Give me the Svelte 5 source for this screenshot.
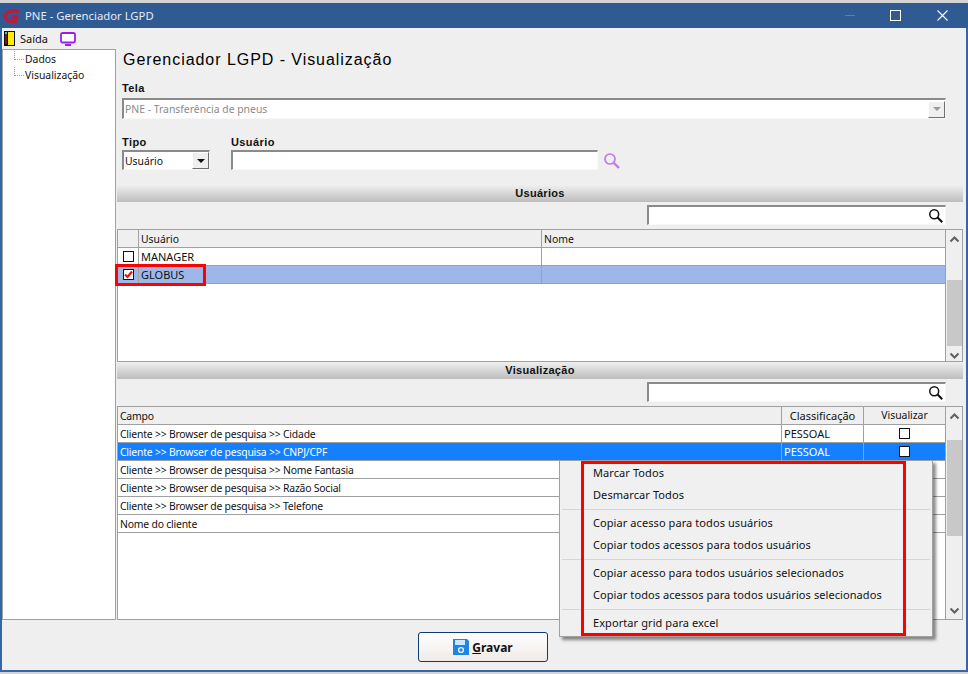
<script>
	const campos = [
		['Cliente >> Browser de pesquisa >> Cidade', 'PESSOAL', true],
		['Cliente >> Browser de pesquisa >> CNPJ/CPF', 'PESSOAL', true],
		['Cliente >> Browser de pesquisa >> Nome Fantasia', '', false],
		['Cliente >> Browser de pesquisa >> Razão Social', '', false],
		['Cliente >> Browser de pesquisa >> Telefone', '', false],
		['Nome do cliente', '', false]
	];
	const menu = [
		['Marcar Todos', 'Desmarcar Todos'],
		['Copiar acesso para todos usuários', 'Copiar todos acessos para todos usuários'],
		['Copiar acesso para todos usuários selecionados', 'Copiar todos acessos para todos usuários selecionados'],
		['Exportar grid para excel']
	];
</script>

{#snippet lupa()}
	<svg class="lupa" width="16" height="16" viewBox="0 0 18 18" fill="none" stroke="currentColor">
		<circle cx="7" cy="7" r="5" stroke-width="1.7" />
		<path d="M10.8 10.8 L16 16" stroke-width="2.4" />
	</svg>
{/snippet}

{#snippet scrollbar(top, height)}
	<div class="scroll">
		<svg class="seta" width="11" height="7" viewBox="0 0 11 7"><path d="M1.5 5.5 L5.5 1.5 L9.5 5.5" fill="none" stroke="#606060" stroke-width="2" /></svg>
		<div class="track"><div class="thumb" style="margin-top:{top}px;height:{height}px"></div></div>
		<svg class="seta" width="11" height="7" viewBox="0 0 11 7"><path d="M1.5 1.5 L5.5 5.5 L9.5 1.5" fill="none" stroke="#606060" stroke-width="2" /></svg>
	</div>
{/snippet}

<div class="janela">
	<header class="titulo">
		<svg class="logo" width="18" height="18" viewBox="0 0 18 18">
			<path d="M16.5 4 H9 C5 4 2.5 6.6 2.5 9.6 C2.5 12.4 4.8 14.2 7.6 14.2 H12.6 L13.6 9.8 H8" fill="none" stroke="#bd1b3e" stroke-width="3.6" />
		</svg>
		<span class="nome">PNE - Gerenciador LGPD</span>
		<div class="controles">
			<span class="min"></span>
			<span class="max"></span>
			<svg width="11" height="11" viewBox="0 0 11 11"><path d="M0.5 0.5 L10.5 10.5 M10.5 0.5 L0.5 10.5" stroke="#fff" stroke-width="1.1" /></svg>
		</div>
	</header>

	<div class="ferramentas">
		<svg width="11" height="15" viewBox="0 0 11 15">
			<rect width="11" height="15" fill="#111" />
			<rect x="4" y="1" width="6" height="13" fill="#ffee00" />
			<rect x="1" y="3" width="2" height="10" fill="#7c1818" />
			<rect x="1" y="1" width="2" height="2" fill="#38c8e0" />
		</svg>
		<span class="sair">Saída</span>
		<svg class="tv" width="16" height="14" viewBox="0 0 16 14">
			<rect x="1" y="1" width="14" height="9.5" rx="1.5" fill="#fff" stroke="#9a20e8" stroke-width="1.8" />
			<path d="M5 13 H11" stroke="#9a20e8" stroke-width="2" />
		</svg>
	</div>

	<div class="corpo">
		<nav class="arvore">
			<div class="no">Dados</div>
			<div class="no">Visualização</div>
		</nav>

		<main class="painel">
			<h1>Gerenciador LGPD - Visualização</h1>

			<div class="campo tela">
				<span class="rotulo">Tela</span>
				<div class="combo">
					<span>PNE - Transferência de pneus</span>
					<span class="botao inativo"><i></i></span>
				</div>
			</div>

			<div class="filtros">
				<div class="campo tipo">
					<span class="rotulo">Tipo</span>
					<div class="combo ativo">
						<span>Usuário</span>
						<span class="botao"><i></i></span>
					</div>
				</div>
				<div class="campo usuario">
					<span class="rotulo">Usuário</span>
					<div class="entrada"></div>
				</div>
				<span class="lupa-roxa">{@render lupa()}</span>
			</div>

			<div class="faixa">Usuários</div>
			<div class="busca"><div class="entrada">{@render lupa()}</div></div>
			<div class="grade g-usuarios">
				<div class="tabela">
					<div class="linha cab">
						<div class="c-check"></div>
						<div class="c-user">Usuário</div>
						<div class="c-nome">Nome</div>
					</div>
					<div class="linha">
						<div class="c-check"><span class="caixa"></span></div>
						<div class="c-user caps">MANAGER</div>
						<div class="c-nome"></div>
					</div>
					<div class="linha claro">
						<div class="c-check">
							<span class="caixa">
								<svg width="9" height="9" viewBox="0 0 9 9"><path d="M1 4.5 L3.5 7 L8 1.5" fill="none" stroke="#e01010" stroke-width="2" /></svg>
							</span>
						</div>
						<div class="c-user caps">GLOBUS</div>
						<div class="c-nome"></div>
					</div>
				</div>
				{@render scrollbar(32, 66)}
				<div class="marca-globus"></div>
			</div>

			<div class="faixa">Visualização</div>
			<div class="busca"><div class="entrada">{@render lupa()}</div></div>
			<div class="grade g-campos">
				<div class="tabela">
					<div class="linha cab">
						<div class="c-campo">Campo</div>
						<div class="c-class centro caps">Classificação</div>
						<div class="c-vis centro">Visualizar</div>
					</div>
					{#each campos as [campo, classe, marcar], i}
						<div class="linha" class:azul={i === 1}>
							<div class="c-campo">{campo}</div>
							<div class="c-class caps">{classe}</div>
							<div class="c-vis centro">
								{#if marcar}<span class="caixa"></span>{/if}
							</div>
						</div>
					{/each}
				</div>
				{@render scrollbar(15, 96)}
			</div>
		</main>
	</div>

	<footer class="rodape">
		<button class="gravar">
			<svg width="16" height="16" viewBox="0 0 16 16">
				<path d="M0 0 H14 L16 2 V16 H0 Z" fill="#1b86e6" />
				<rect x="2" y="1" width="10" height="5" fill="#cfe6fb" />
				<circle cx="8" cy="11" r="2.4" fill="none" stroke="#e8f4fe" stroke-width="1.4" />
			</svg>
			<span><u>G</u>ravar</span>
		</button>
	</footer>

	<div class="menu">
		{#each menu as grupo, g}
			{#if g > 0}<hr />{/if}
			{#each grupo as item}
				<div class="item">{item}</div>
			{/each}
		{/each}
		<div class="marca-menu"></div>
	</div>
</div>

<style>
	:global(body) {
		background: #d4d4d4;
		overflow: hidden;
	}
	.janela {
		position: relative;
		box-sizing: border-box;
		width: 968px;
		height: 669px;
		margin-top: 3px;
		display: flex;
		flex-direction: column;
		background: #efefef;
		border: solid #3566a5;
		border-width: 0 2px 2px 2px;
		font-family: "Noto Sans", sans-serif;
		font-size: 10.4px;
		color: #111;
	}
	.titulo {
		flex: none;
		height: 25px;
		margin: 0 -2px;
		padding-left: 3px;
		display: flex;
		align-items: center;
		background: #2f5a92;
		color: #e6ebf2;
		font-size: 11.3px;
	}
	.logo {
		margin-right: 4px;
	}
	.controles {
		margin-left: auto;
		padding-right: 20px;
		display: flex;
		align-items: center;
	}
	.min {
		width: 10px;
		height: 1px;
		background: #5c7ea9;
		margin-right: 35px;
	}
	.max {
		width: 9px;
		height: 9px;
		border: 1px solid #fff;
		margin-right: 36px;
	}
	.ferramentas {
		flex: none;
		height: 21px;
		padding-left: 2px;
		display: flex;
		align-items: center;
		font-size: 11px;
	}
	.sair {
		margin-left: 5px;
	}
	.tv {
		margin-left: 12px;
	}
	.corpo {
		flex: none;
		height: 571px;
		margin-right: 3px;
		display: flex;
		gap: 1px;
	}
	.arvore {
		box-sizing: border-box;
		width: 114px;
		padding-top: 1px;
		background: #fff;
		border: 1px solid #a0a0a0;
	}
	.no {
		height: 16px;
		line-height: 16px;
		padding-left: 22px;
		position: relative;
	}
	.no::before {
		content: "";
		position: absolute;
		left: 11px;
		top: 0;
		width: 9px;
		height: 8px;
		border-left: 1px dotted #999;
		border-bottom: 1px dotted #999;
	}
	.painel {
		flex: 1;
		min-width: 0;
		display: flex;
		flex-direction: column;
	}
	h1 {
		margin: 0;
		height: 31px;
		padding: 0 0 0 6px;
		line-height: 21px;
		font-size: 16px;
		font-weight: normal;
		font-family: "Liberation Sans", sans-serif;
		letter-spacing: 0.95px;
		color: #000;
	}
	.campo {
		display: flex;
		flex-direction: column;
	}
	.rotulo {
		height: 16px;
		line-height: 16px;
		font-weight: bold;
		font-size: 11px;
		font-family: "Liberation Sans", sans-serif;
		letter-spacing: 0.4px;
	}
	.tela {
		padding-left: 5px;
		width: 824px;
	}
	.tela .rotulo {
		height: 18px;
	}
	.combo,
	.entrada {
		box-sizing: border-box;
		height: 20px;
		background: #fff;
		border: 1px solid #f8f8f8;
		border-top: 2px solid #8a8a8a;
		border-left: 2px solid #8a8a8a;
		display: flex;
		align-items: center;
		justify-content: space-between;
	}
	.combo > span:first-child {
		line-height: 14px;
	}
	.tela .combo {
		height: 21px;
		color: #8a8a8a;
		padding-left: 1px;
	}
	.botao {
		box-sizing: border-box;
		width: 17px;
		height: 17px;
		background: #efefef;
		border: 1px solid;
		border-color: #fff #6e6e6e #6e6e6e #fff;
		display: flex;
		align-items: center;
		justify-content: center;
	}
	.botao i {
		width: 0;
		height: 0;
		border: 4px solid transparent;
		border-top: 4px solid #111;
		border-bottom: 0;
	}
	.botao.inativo i {
		border-top-color: #9a9a9a;
	}
	.filtros {
		height: 66px;
		padding: 15px 0 0 5px;
		box-sizing: border-box;
		display: flex;
		align-items: flex-start;
	}
	.tipo {
		width: 88px;
	}
	.tipo .combo {
		padding-left: 1px;
		color: #111;
	}
	.usuario {
		width: 367px;
		margin-left: 21px;
	}
	.lupa-roxa {
		margin: 18px 0 0 5px;
		color: #c07ce8;
	}
	.lupa-roxa .lupa {
		width: 18px;
		height: 18px;
	}
	.faixa {
		flex: none;
		height: 17px;
		line-height: 17px;
		text-align: center;
		font-weight: bold;
		font-size: 11px;
		font-family: "Liberation Sans", sans-serif;
		letter-spacing: 0.3px;
		background: linear-gradient(#efefef, #bdbdbd);
	}
	.busca {
		flex: none;
		height: 27px;
		padding: 3px 17px 0 530px;
		box-sizing: border-box;
	}
	.busca .entrada {
		justify-content: flex-end;
		padding-right: 1px;
		color: #111;
	}
	.lupa {
		display: block;
	}
	.grade {
		flex: none;
		position: relative;
		box-sizing: border-box;
		display: flex;
		background: #fff;
		border: 1px solid #a0a0a0;
	}
	.g-usuarios {
		height: 133px;
	}
	.g-campos {
		flex: 1;
	}
	.tabela {
		flex: 1;
		min-width: 0;
		border-right: 1px solid #a0a0a0;
	}
	.linha {
		box-sizing: border-box;
		height: 18px;
		display: flex;
		border-bottom: 1px solid #a0a0a0;
	}
	.linha > div {
		box-sizing: border-box;
		line-height: 19px;
		padding-left: 2px;
		white-space: nowrap;
		border-right: 1px solid #a0a0a0;
	}
	.linha > div:last-child {
		border-right: 0;
	}
	.linha > .caps {
		font-size: 11px;
		line-height: 17px;
	}
	.cab {
		background: #efefef;
	}
	.claro {
		background: #9db8e8;
	}
	.azul {
		background: #1580ff;
		color: #fff;
	}
	.c-check {
		width: 21px;
		display: flex;
		align-items: center;
		justify-content: center;
		padding: 0 !important;
	}
	.c-user {
		width: 403px;
	}
	.c-nome {
		flex: 1;
	}
	.c-campo {
		width: 664px;
		letter-spacing: -0.2px;
	}
	.c-class {
		width: 82px;
	}
	.c-vis {
		flex: 1;
		display: flex;
		align-items: center;
		justify-content: center;
		padding: 0 !important;
	}
	.centro {
		text-align: center;
		padding-left: 0 !important;
	}
	.caixa {
		box-sizing: border-box;
		width: 11px;
		height: 11px;
		background: #fff;
		border: 1px solid #111;
		display: flex;
		align-items: center;
		justify-content: center;
	}
	.scroll {
		flex: none;
		width: 16px;
		display: flex;
		flex-direction: column;
		align-items: center;
		background: #efefef;
	}
	.seta {
		flex: none;
		margin: 6px 0 5px;
	}
	.track {
		flex: 1;
		width: 15px;
	}
	.thumb {
		background: #c8c8c8;
	}
	.marca-globus {
		position: absolute;
		left: -3px;
		top: 34px;
		box-sizing: border-box;
		width: 91px;
		height: 22px;
		border: 3px solid #ff0000;
	}
	.rodape {
		flex: 1;
		display: flex;
		justify-content: center;
		align-items: flex-start;
		padding: 12px 2px 0 0;
	}
	.gravar {
		box-sizing: border-box;
		width: 130px;
		height: 30px;
		display: flex;
		align-items: center;
		justify-content: center;
		gap: 3px;
		padding: 0;
		background: linear-gradient(#fff, #efeae6);
		border: 1px solid #0c3c74;
		border-radius: 3px;
		font: bold 12px "Noto Sans", sans-serif;
		color: #111;
	}
	.menu {
		position: absolute;
		left: 557px;
		top: 457px;
		box-sizing: border-box;
		width: 374px;
		height: 177px;
		padding: 2px 2px 0;
		background: #f0f0f0;
		border: 1px solid #a0a0a0;
		box-shadow: 3px 3px 3px rgba(0, 0, 0, 0.45);
		font-size: 11px;
		letter-spacing: 0.08px;
	}
	.item {
		height: 22px;
		line-height: 20px;
		padding-left: 31px;
		white-space: nowrap;
	}
	.menu hr {
		height: 1px;
		margin: 2px 0 3px;
		padding: 0;
		border: 0;
		background: #d6d6d6;
	}
	.marca-menu {
		position: absolute;
		left: 21px;
		top: 0;
		box-sizing: border-box;
		width: 325px;
		height: 175px;
		border: 3px solid #ff0000;
	}
</style>
